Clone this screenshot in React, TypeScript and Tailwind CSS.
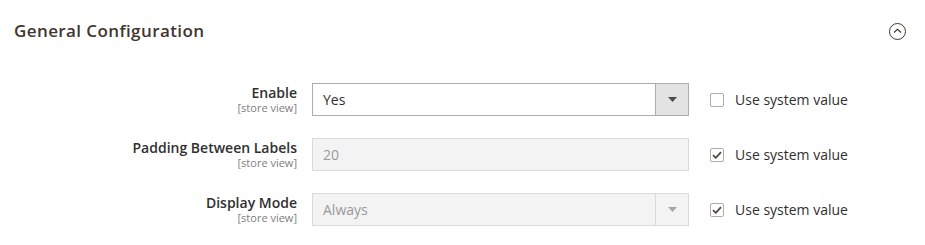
import React from "react";

const font = { fontFamily: '"Open Sans", "Noto Sans", sans-serif' };

function Check({ checked }: { checked: boolean }) {
  return (
    <div className="w-[14px] h-[14px] border border-[#adadad] rounded-[2px] bg-white flex items-center justify-center shrink-0">
      {checked && (
        <svg width="10" height="8" viewBox="0 0 10 8">
          <path d="M1 4.2 L3.8 6.8 L9 1.2" fill="none" stroke="#514943" strokeWidth="1.8" />
        </svg>
      )}
    </div>
  );
}

function Arrow({ disabled }: { disabled?: boolean }) {
  return (
    <svg width="9" height="5" viewBox="0 0 9 5">
      <path d="M0 0 L9 0 L4.5 5 Z" fill={disabled ? "#a8a8a8" : "#514943"} />
    </svg>
  );
}

function Row({
  label,
  children,
  checked,
}: {
  label: string;
  children: React.ReactNode;
  checked: boolean;
}) {
  return (
    <div className="flex items-start">
      <div className="w-[297px] text-right pt-[2px]">
        <div className="text-[14px] leading-[16px] font-semibold text-[#303030]">{label}</div>
        <div className="text-[11px] leading-[13px] text-[#808080]">[store view]</div>
      </div>
      <div className="ml-[15px] w-[377px] h-[33px]">{children}</div>
      <div className="ml-[21px] h-[33px] flex items-center">
        <Check checked={checked} />
        <span className="ml-[11px] text-[14px] text-[#303030]">Use system value</span>
      </div>
    </div>
  );
}

export default function App() {
  return (
    <div className="w-[925px] h-[245px] bg-white overflow-hidden" style={font}>
      <div className="h-[62px] flex items-center justify-between pl-[14px] pr-[20px]">
        <h2 className="text-[17px] font-semibold text-[#41362f] tracking-[0.4px]">General Configuration</h2>
        <div className="w-[17px] h-[17px] rounded-full border border-[#41362f] flex items-center justify-center mr-[-1px]">
          <svg width="9" height="6" viewBox="0 0 9 6">
            <path d="M1 4.5 L4.5 1.3 L8 4.5" fill="none" stroke="#41362f" strokeWidth="1.2" />
          </svg>
        </div>
      </div>
      <div className="pt-[21px] flex flex-col gap-[22px]">
        <Row label="Enable" checked={false}>
          <div className="h-full flex border border-[#adadad] bg-white">
            <div className="flex-1 flex items-center pl-[10px] text-[14px] text-[#303030]">Yes</div>
            <div className="w-[33px] bg-[#e3e3e3] border-l border-[#adadad] flex items-center justify-center">
              <Arrow />
            </div>
          </div>
        </Row>
        <Row label="Padding Between Labels" checked={true}>
          <div className="h-full flex items-center border border-[#dadada] bg-[#f3f3f3] pl-[10px] text-[14px] text-[#999999]">
            20
          </div>
        </Row>
        <Row label="Display Mode" checked={true}>
          <div className="h-full flex border border-[#dadada] bg-[#f3f3f3]">
            <div className="flex-1 flex items-center pl-[10px] text-[14px] text-[#999999]">Always</div>
            <div className="w-[33px] border-l border-[#dadada] flex items-center justify-center">
              <Arrow disabled />
            </div>
          </div>
        </Row>
      </div>
    </div>
  );
}
